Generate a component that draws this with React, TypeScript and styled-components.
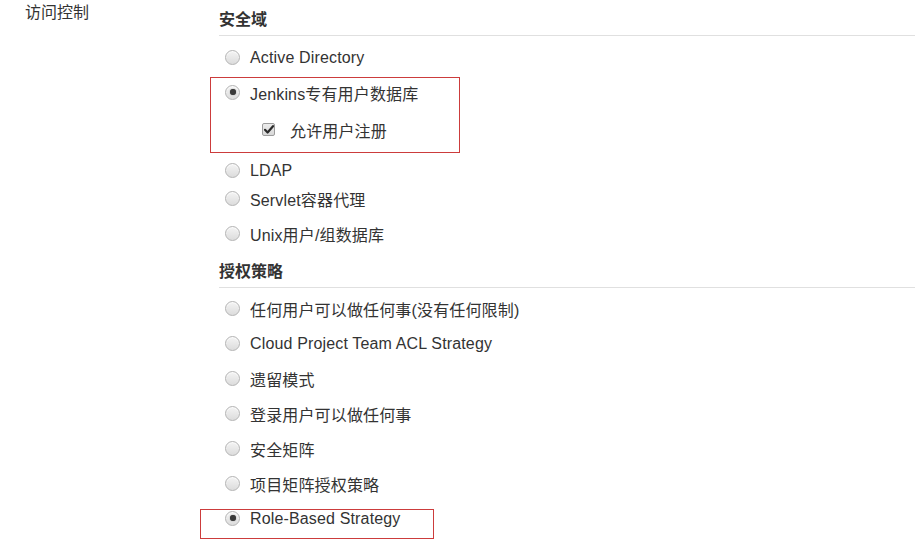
import React from "react";
import styled, { createGlobalStyle } from "styled-components";

const Global = createGlobalStyle`
  html, body { margin: 0; padding: 0; background: #fff; }
  body {
    font-family: "Liberation Sans", Arial, "Noto Sans CJK SC", sans-serif;
    color: #333;
    font-size: 16px;
  }
`;

const Page = styled.div`
  display: grid;
  grid-template-columns: 219px 1fr;
  width: 915px;
  height: 542px;
  overflow: hidden;
`;

const Label = styled.div`
  padding-left: 25px;
  padding-top: 2px;
  line-height: 22px;
  font-size: 16px;
  color: #333;
`;

const Content = styled.div`
  position: relative;
  display: flex;
  flex-direction: column;
`;

const Heading = styled.div<{ $mt: number }>`
  margin-top: ${(p) => p.$mt}px;
  font-size: 16px;
  font-weight: bold;
  line-height: 22px;
  color: #333;
  padding-bottom: 4px;
  border-bottom: 1px solid #e0e0e0;
`;

const Row = styled.label<{ $mt: number; $indent?: number }>`
  display: flex;
  align-items: center;
  height: 28px;
  margin-top: ${(p) => p.$mt}px;
  padding-left: ${(p) => p.$indent ?? 6}px;
  font-size: 16px;
  color: #333;
  white-space: nowrap;
`;

const RowText = styled.span`
  padding-top: 2px;
  letter-spacing: 0.15px;
`;

const RadioCircle = styled.span<{ $checked?: boolean }>`
  position: relative;
  box-sizing: border-box;
  width: 15px;
  height: 15px;
  border-radius: 50%;
  border: 1px solid #b4b4b4;
  background: linear-gradient(#f4f4f4, #dcdcdc);
  box-shadow: inset 0 1px 1px rgba(255, 255, 255, 0.8);
  margin-right: 10px;
  flex-shrink: 0;
  &::after {
    content: "";
    display: ${(p) => (p.$checked ? "block" : "none")};
    position: absolute;
    left: 3.5px;
    top: 3.5px;
    width: 6px;
    height: 6px;
    border-radius: 50%;
    background: #3a3a3a;
    box-shadow: 0 0 1px #555;
  }
`;

const CheckBox = styled.span`
  box-sizing: border-box;
  width: 13px;
  height: 13px;
  border: 1px solid #9c9c9c;
  border-radius: 2px;
  background: linear-gradient(#ececec, #d8d8d8);
  margin-right: 15px;
  display: flex;
  align-items: center;
  justify-content: center;
  flex-shrink: 0;
`;

const Annotation = styled.div<{ $l: number; $t: number; $w: number; $h: number }>`
  position: absolute;
  left: ${(p) => p.$l}px;
  top: ${(p) => p.$t}px;
  width: ${(p) => p.$w}px;
  height: ${(p) => p.$h}px;
  box-sizing: border-box;
  border: 1px solid #cc3c3c;
  pointer-events: none;
`;

const Radio = ({ checked, label, mt }: { checked?: boolean; label: string; mt: number }) => (
  <Row $mt={mt}>
    <RadioCircle $checked={checked} />
    <RowText>{label}</RowText>
  </Row>
);

export default function App() {
  return (
    <>
      <Global />
      <Page>
        <Label>访问控制</Label>
        <Content>
          <Heading $mt={9}>安全域</Heading>
          <Radio label="Active Directory" mt={7} />
          <Radio label="Jenkins专有用户数据库" checked mt={7} />
          <Row $mt={9} $indent={43}>
            <CheckBox>
              <svg width="10" height="9" viewBox="0 0 10 9">
                <path d="M1 4.8 L3.6 7.5 L9 1.2" fill="none" stroke="#2a2a2a" strokeWidth="2.2" strokeLinecap="round" strokeLinejoin="round" />
              </svg>
            </CheckBox>
            <RowText>允许用户注册</RowText>
          </Row>
          <Radio label="LDAP" mt={13} />
          <Radio label="Servlet容器代理" mt={0} />
          <Radio label="Unix用户/组数据库" mt={7} />
          <Heading $mt={14}>授权策略</Heading>
          <Radio label="任何用户可以做任何事(没有任何限制)" mt={6} />
          <Radio label="Cloud Project Team ACL Strategy" mt={7} />
          <Radio label="遗留模式" mt={7} />
          <Radio label="登录用户可以做任何事" mt={7} />
          <Radio label="安全矩阵" mt={7} />
          <Radio label="项目矩阵授权策略" mt={7} />
          <Radio label="Role-Based Strategy" checked mt={7} />
          <Annotation $l={-9} $t={77} $w={250} $h={76} />
          <Annotation $l={-19} $t={509} $w={234} $h={30} />
        </Content>
      </Page>
    </>
  );
}
